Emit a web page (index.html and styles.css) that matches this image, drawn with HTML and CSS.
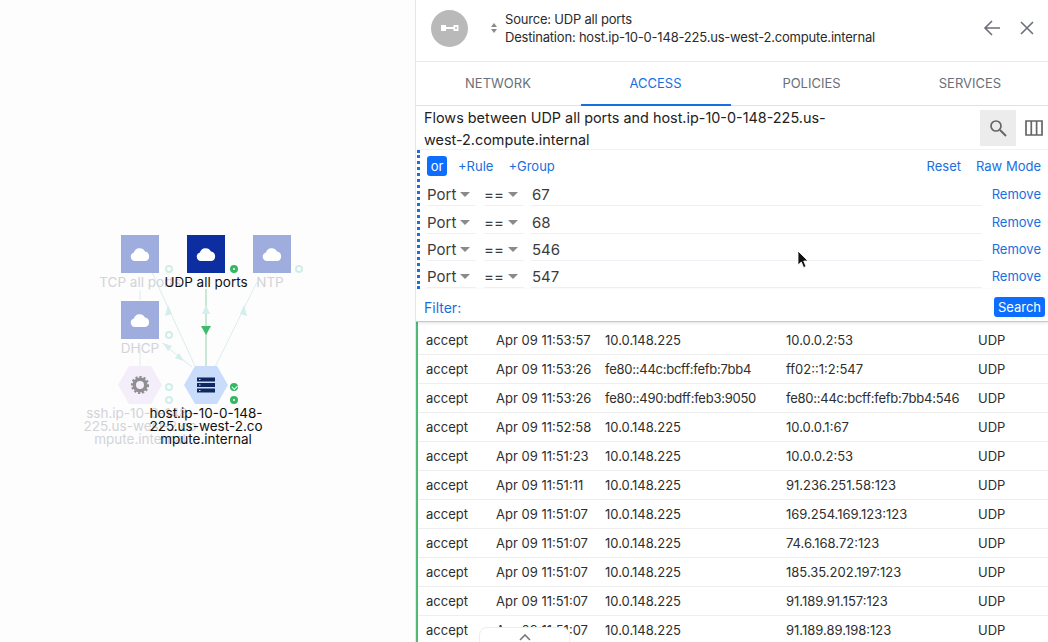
FILE: index.html
```html
<!DOCTYPE html>
<html lang="en">
<head>
    <meta charset="UTF-8">
    <meta name="viewport" content="width=device-width, initial-scale=1.0">
    <title>Flows</title>
    <link rel="stylesheet" href="styles.css">
</head>
<body>
<div class="page">

    <!-- Graph -->
    <div class="graph">
        <svg class="edges" width="415" height="642" viewBox="0 0 415 642">
            <g stroke="#dcecec" stroke-width="1" fill="none">
                <path d="M140 290V300M140 345V366"/>
                <path d="M150 268L195 366"/>
                <path d="M257 282L215 367"/>
                <path d="M162 343L192 367"/>
            </g>
            <path d="M206 289V366" stroke="#a5dcbc" stroke-width="1.2" fill="none"/>
            <g fill="#d3eeec">
                <path d="M168 305L172 314L165 316Z"/>
                <path d="M244 305L247 316L240 314Z"/>
                <path d="M206 305L210 314H202Z"/>
                <path d="M163 343L172 346L168 351Z"/>
                <path d="M184 361L175 358L179 353Z"/>
            </g>
            <path d="M206 335L201 326H211Z" fill="#3fbb6c"/>
        </svg>

        <div class="node cloud faded" style="left:121px;top:235px"><svg width="20" height="14" viewBox="0 0 20 14"><path d="M5 14A4.4 4.4 0 0 1 3.9 5.4 6 6 0 0 1 15 4.6 4.8 4.8 0 0 1 15.5 14Z" fill="#fff"/></svg></div>
        <div class="node cloud selected" style="left:187px;top:235px"><svg width="20" height="14" viewBox="0 0 20 14"><path d="M5 14A4.4 4.4 0 0 1 3.9 5.4 6 6 0 0 1 15 4.6 4.8 4.8 0 0 1 15.5 14Z" fill="#fff"/></svg></div>
        <div class="node cloud faded" style="left:253px;top:235px"><svg width="20" height="14" viewBox="0 0 20 14"><path d="M5 14A4.4 4.4 0 0 1 3.9 5.4 6 6 0 0 1 15 4.6 4.8 4.8 0 0 1 15.5 14Z" fill="#fff"/></svg></div>
        <div class="node cloud faded" style="left:121px;top:301px"><svg width="20" height="14" viewBox="0 0 20 14"><path d="M5 14A4.4 4.4 0 0 1 3.9 5.4 6 6 0 0 1 15 4.6 4.8 4.8 0 0 1 15.5 14Z" fill="#fff"/></svg></div>

        <div class="node hex hex-ssh" style="left:118px;top:366px">
            <svg width="20" height="20" viewBox="0 0 20 20">
                <circle cx="10" cy="10" r="5.8" fill="none" stroke="#8f8f92" stroke-width="3.6"/>
                <circle cx="10" cy="10" r="8" fill="none" stroke="#8f8f92" stroke-width="2.2" stroke-dasharray="2.2 1.9"/>
            </svg>
        </div>
        <div class="node hex hex-host" style="left:184px;top:366px">
            <svg width="20" height="16" viewBox="0 0 20 16" fill="#10275f">
                <rect x="1" y="0.5" width="18" height="4"/>
                <rect x="1" y="6" width="18" height="4"/>
                <rect x="1" y="11.5" width="18" height="4"/>
                <g fill="#cfe0fb"><rect x="3" y="2" width="1.5" height="1"/><rect x="3" y="7.5" width="1.5" height="1"/><rect x="3" y="13" width="1.5" height="1"/></g>
            </svg>
        </div>

        <span class="dot dot-pale" style="left:165px;top:265px"></span>
        <span class="dot dot-green" style="left:230px;top:265px"></span>
        <span class="dot dot-pale" style="left:295px;top:265px"></span>
        <span class="dot dot-pale" style="left:165px;top:331px"></span>
        <span class="dot dot-pale" style="left:165px;top:383px"></span>
        <span class="dot dot-pale" style="left:165px;top:396px"></span>
        <span class="dot dot-check" style="left:230px;top:383px"></span>
        <span class="dot dot-green" style="left:230px;top:396px"></span>

        <div class="label label-faded" style="left:80px;top:276px;width:120px">TCP all ports</div>
        <div class="label label-faded" style="left:230px;top:276px;width:80px">NTP</div>
        <div class="label label-faded" style="left:100px;top:342px;width:80px">DHCP</div>
        <div class="label label-faded" style="left:80px;top:407px;width:120px">ssh.ip-10-0-148-<br>225.us-west-2.co<br>mpute.internal</div>
        <div class="label label-top" style="left:146px;top:276px;width:120px">UDP all ports</div>
        <div class="label label-top" style="left:146px;top:407px;width:120px">host.ip-10-0-148-<br>225.us-west-2.co<br>mpute.internal</div>
    </div>

    <!-- Detail panel -->
    <div class="panel">
        <div class="panel-header">
            <div class="avatar">
                <svg width="18" height="8" viewBox="0 0 18 8"><rect x="0" y="1" width="5" height="6" fill="#fff"/><rect x="5" y="3" width="8" height="2" fill="#fff"/><rect x="12.5" y="1" width="5" height="6" fill="#fff"/><rect x="14.2" y="3" width="1.6" height="2" fill="#b9b9b9"/></svg>
            </div>
            <svg class="sort-icon" width="8" height="12" viewBox="0 0 8 12"><path d="M4 1L7 5H1ZM4 11L1 7H7Z" fill="#8a8a8a"/></svg>
            <div class="header-text">
                <div>Source: UDP all ports</div>
                <div>Destination: host.ip-10-0-148-225.us-west-2.compute.internal</div>
            </div>
            <svg class="head-btn" width="18" height="18" viewBox="0 0 18 18"><path d="M17 9H2M9 2L2 9L9 16" fill="none" stroke="#6b6f76" stroke-width="1.6"/></svg>
            <svg class="head-btn" width="14" height="14" viewBox="0 0 14 14"><path d="M1 1L13 13M13 1L1 13" fill="none" stroke="#6b6f76" stroke-width="1.6"/></svg>
        </div>

        <div class="tabs">
            <div class="tab">NETWORK</div>
            <div class="tab active">ACCESS</div>
            <div class="tab">POLICIES</div>
            <div class="tab">SERVICES</div>
        </div>

        <div class="title-row">
            <div class="title">Flows between UDP all ports and host.ip-10-0-148-225.us-west-2.compute.internal</div>
            <div class="icon-btn on">
                <svg width="18" height="18" viewBox="0 0 18 18"><circle cx="7" cy="7" r="5" fill="none" stroke="#666" stroke-width="1.7"/><path d="M11 11L17 17" stroke="#666" stroke-width="2"/></svg>
            </div>
            <svg class="col-icon" width="18" height="16" viewBox="0 0 18 16"><path d="M1 1H17V15H1ZM6.3 1V15M11.6 1V15" fill="none" stroke="#666" stroke-width="1.7"/></svg>
        </div>

        <div class="query">
            <div class="query-top">
                <span class="or-btn">or</span>
                <a class="link add">+Rule</a>
                <a class="link add">+Group</a>
                <a class="link reset">Reset</a>
                <a class="link raw">Raw Mode</a>
            </div>
            <div class="rule">
                <div class="sel sel-field">Port<i class="caret"></i></div>
                <div class="sel sel-op">==<i class="caret"></i></div>
                <div class="rule-value">67</div>
                <a class="link remove">Remove</a>
            </div>
            <div class="rule">
                <div class="sel sel-field">Port<i class="caret"></i></div>
                <div class="sel sel-op">==<i class="caret"></i></div>
                <div class="rule-value">68</div>
                <a class="link remove">Remove</a>
            </div>
            <div class="rule">
                <div class="sel sel-field">Port<i class="caret"></i></div>
                <div class="sel sel-op">==<i class="caret"></i></div>
                <div class="rule-value">546</div>
                <a class="link remove">Remove</a>
            </div>
            <div class="rule">
                <div class="sel sel-field">Port<i class="caret"></i></div>
                <div class="sel sel-op">==<i class="caret"></i></div>
                <div class="rule-value">547</div>
                <a class="link remove">Remove</a>
            </div>
        </div>

        <div class="filter-row">
            <span class="filter-label">Filter:</span>
            <span class="search-btn">Search</span>
        </div>

        <div class="rows">
            <div class="row"><span>accept</span><span>Apr 09 11:53:57</span><span>10.0.148.225</span><span>10.0.0.2:53</span><span>UDP</span></div>
            <div class="row"><span>accept</span><span>Apr 09 11:53:26</span><span class="tight">fe80::44c:bcff:fefb:7bb4</span><span>ff02::1:2:547</span><span>UDP</span></div>
            <div class="row"><span>accept</span><span>Apr 09 11:53:26</span><span class="tight">fe80::490:bdff:feb3:9050</span><span class="tight">fe80::44c:bcff:fefb:7bb4:546</span><span>UDP</span></div>
            <div class="row"><span>accept</span><span>Apr 09 11:52:58</span><span>10.0.148.225</span><span>10.0.0.1:67</span><span>UDP</span></div>
            <div class="row"><span>accept</span><span>Apr 09 11:51:23</span><span>10.0.148.225</span><span>10.0.0.2:53</span><span>UDP</span></div>
            <div class="row"><span>accept</span><span>Apr 09 11:51:11</span><span>10.0.148.225</span><span>91.236.251.58:123</span><span>UDP</span></div>
            <div class="row"><span>accept</span><span>Apr 09 11:51:07</span><span>10.0.148.225</span><span>169.254.169.123:123</span><span>UDP</span></div>
            <div class="row"><span>accept</span><span>Apr 09 11:51:07</span><span>10.0.148.225</span><span>74.6.168.72:123</span><span>UDP</span></div>
            <div class="row"><span>accept</span><span>Apr 09 11:51:07</span><span>10.0.148.225</span><span>185.35.202.197:123</span><span>UDP</span></div>
            <div class="row"><span>accept</span><span>Apr 09 11:51:07</span><span>10.0.148.225</span><span>91.189.91.157:123</span><span>UDP</span></div>
            <div class="row"><span>accept</span><span>Apr 09 11:51:07</span><span>10.0.148.225</span><span>91.189.89.198:123</span><span>UDP</span></div>
        </div>

        <div class="drawer-tab">
            <svg width="12" height="7" viewBox="0 0 12 7"><path d="M1 6L6 1L11 6" fill="none" stroke="#777" stroke-width="1.6"/></svg>
        </div>

        <!-- mouse pointer -->
        <svg class="cursor" width="12" height="19" viewBox="0 0 12 19"><path d="M1 1V15L4.3 12L6.6 17.5L9 16.5L6.7 11H11Z" fill="#111" stroke="#fff" stroke-width="0.8"/></svg>
    </div>

</div>
</body>
</html>
```

FILE: styles.css
```css
* {
    box-sizing: border-box;
}

html, body {
    margin: 0;
    height: 100%;
    overflow: hidden;
    background-color: #fff;
}

body {
    font-family: Inter, "Liberation Sans", sans-serif;
    font-size: 13px;
    color: #222;
}

.page {
    display: flex;
    width: 1048px;
    height: 642px;
}

/* Graph */
.graph {
    position: relative;
    width: 416px;
    height: 642px;
    flex: none;
    border-right: 1px solid #e6e6ea;
    background-color: #fdfdfd;
}

.edges {
    position: absolute;
    left: 0;
    top: 0;
}

.node {
    position: absolute;
    display: flex;
    align-items: center;
    justify-content: center;
}

.cloud {
    width: 38px;
    height: 38px;
}

.cloud.faded {
    background-color: #9eadde;
}

.cloud.selected {
    background-color: #0c2ea0;
}

.hex {
    width: 44px;
    height: 38px;
    clip-path: polygon(25% 0, 75% 0, 100% 50%, 75% 100%, 25% 100%, 0 50%);
}

.hex-ssh {
    background-color: #f4eefb;
}

.hex-host {
    background-color: #c9dcfb;
}

.dot {
    position: absolute;
    width: 8px;
    height: 8px;
    border-radius: 50%;
}

.dot-pale {
    background-color: #fff;
    border: 2px solid #cfeee8;
}

.dot-green {
    background-color: #fff;
    border: 3px solid #36b765;
}

.dot-check {
    background-color: #36b765;
}

.dot-check::after {
    content: "";
    position: absolute;
    left: 2px;
    top: 2px;
    width: 4px;
    height: 2.5px;
    border-left: 1px solid #fff;
    border-bottom: 1px solid #fff;
    transform: rotate(-45deg);
}

.label {
    position: absolute;
    text-align: center;
    line-height: 13px;
    font-size: 13.5px;
    white-space: nowrap;
}

.label-faded {
    color: #d2d4d8;
}

.label-top {
    color: #111;
}

/* Panel */
.panel {
    position: relative;
    flex: 1;
    height: 642px;
    overflow: hidden;
}

.panel-header {
    display: flex;
    align-items: center;
    height: 62px;
    padding: 0 14px 5px 15px;
    border-bottom: 1px solid #e6e9f0;
    line-height: 18px;
}

.avatar {
    display: flex;
    align-items: center;
    justify-content: center;
    width: 37px;
    height: 37px;
    margin-right: 21.5px;
    border-radius: 50%;
    background-color: #b9b9b9;
}

.sort-icon {
    margin-right: 7.5px;
}

.header-text {
    flex: 1;
    color: #2b2b2b;
    letter-spacing: -0.2px;
}

.head-btn {
    margin-left: 19px;
}

.tabs {
    display: grid;
    grid-template-columns: 158px 157px 155px 162px;
    height: 44px;
    padding-left: 3px;
    border-bottom: 1px solid #dfe1e5;
}

.tab {
    margin: 0 3.5px;
    height: 44px;
    line-height: 43px;
    text-align: center;
    color: #6a6f78;
}

.tab.active {
    color: #1a6fe0;
    border-bottom: 2px solid #1a6fe0;
}

.title-row {
    display: flex;
    align-items: flex-start;
    height: 44px;
    padding: 1px 5px 0 8px;
    border-bottom: 1px solid #f1f2f5;
}

.title {
    width: 421px;
    margin-right: 135px;
    font-size: 14.4px;
    line-height: 22px;
    color: #222;
}

.icon-btn {
    display: flex;
    align-items: center;
    justify-content: center;
    width: 36px;
    height: 36px;
    margin-top: 3px;
    margin-right: 9px;
}

.icon-btn.on {
    background-color: #ececec;
}

.col-icon {
    margin-top: 13px;
}

.query {
    margin-left: 1px;
    padding: 3px 0 0 7px;
    height: 139px;
    border-left: 3px dotted #1a6fe0;
}

.query-top {
    display: flex;
    align-items: center;
    height: 26px;
}

.link {
    color: #1a6fe0;
}

.or-btn {
    width: 20px;
    height: 20px;
    line-height: 20px;
    margin-right: 11px;
    text-align: center;
    border-radius: 3px;
    background-color: #0d6efd;
    color: #fff;
}

.add {
    margin-right: 15px;
}

.reset {
    margin-left: auto;
    margin-right: 15px;
}

.raw {
    margin-right: 7px;
}

.rule {
    display: flex;
    align-items: flex-end;
    height: 27.3px;
}

.sel {
    position: relative;
    height: 22px;
    line-height: 21px;
    font-size: 15px;
    color: #3c3c3c;
    border-bottom: 1px solid #eef0f5;
}

.sel-field {
    width: 49px;
    margin-right: 8px;
}

.sel-op {
    width: 40px;
    margin-right: 7px;
}

.caret {
    position: absolute;
    right: 6px;
    top: 8px;
    border-left: 5px solid transparent;
    border-right: 5px solid transparent;
    border-top: 5px solid #8a8a8a;
}

.rule-value {
    width: 451px;
    height: 22px;
    line-height: 21px;
    font-size: 15px;
    padding-left: 1px;
    color: #3c3c3c;
    border-bottom: 1px solid #eef0f5;
}

.remove {
    margin-left: auto;
    margin-right: 7px;
    height: 22px;
    line-height: 21px;
}

.filter-row {
    display: flex;
    align-items: center;
    justify-content: space-between;
    height: 33px;
    padding: 4px 3px 0 8px;
    position: relative;
    z-index: 1;
    background-color: #fff;
    border-bottom: 1px solid #c9c9c9;
    box-shadow: 0 1px 3px rgba(0, 0, 0, 0.12);
}

.filter-label {
    color: #1a6fe0;
    font-size: 14px;
}

.search-btn {
    width: 51px;
    height: 20px;
    line-height: 20px;
    text-align: center;
    border-radius: 3px;
    background-color: #0d6efd;
    color: #fff;
}

.rows {
    padding-top: 3.5px;
    border-left: 2.5px solid #4dbb74;
}

.row {
    display: grid;
    grid-template-columns: 70px 109px 181px 192px 1fr;
    align-items: center;
    height: 29.1px;
    padding-left: 8px;
    border-bottom: 1px solid #eeeeee;
    color: #2e2e2e;
    white-space: nowrap;
}

.tight {
    letter-spacing: -0.25px;
}

.drawer-tab {
    position: absolute;
    left: 63px;
    bottom: -6px;
    width: 91px;
    height: 21px;
    padding-top: 5px;
    text-align: center;
    background-color: #fff;
    border: 1px solid #eceef2;
    border-radius: 8px 8px 0 0;
    line-height: 7px;
}

.cursor {
    position: absolute;
    left: 381px;
    top: 250px;
}
```
